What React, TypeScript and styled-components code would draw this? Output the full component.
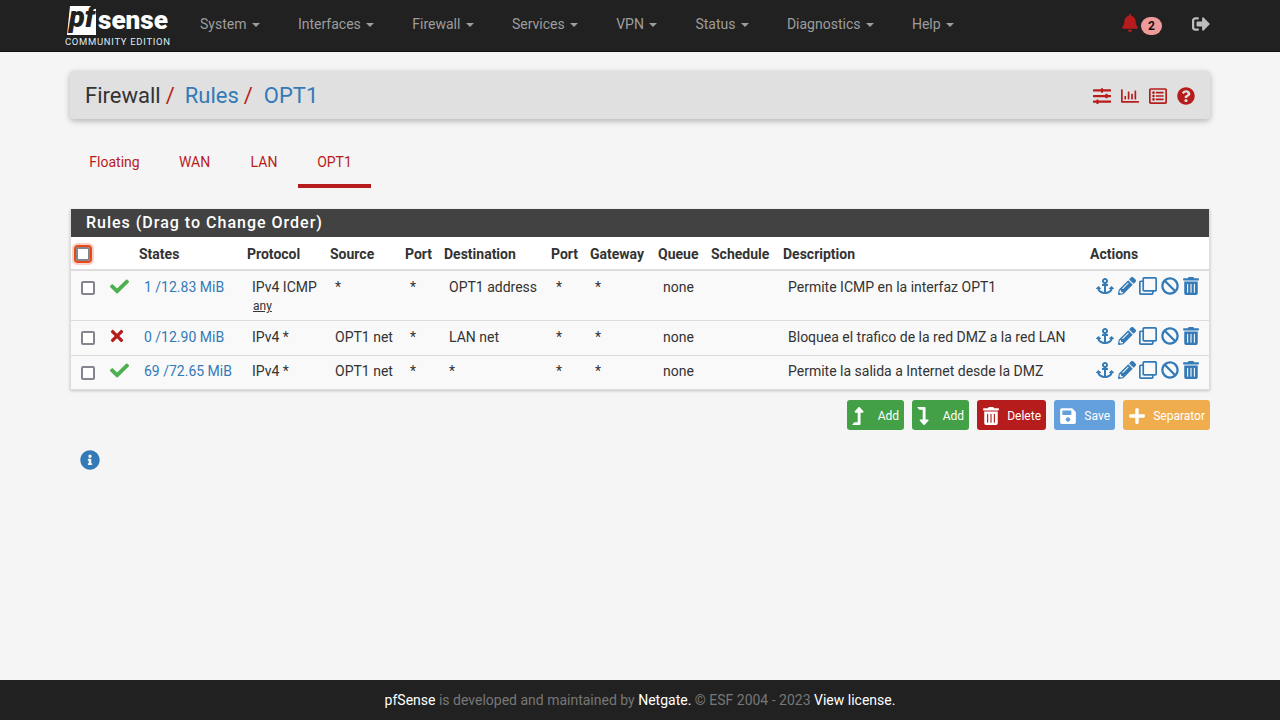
import React from "react";
import styled, { createGlobalStyle } from "styled-components";
import {
  FaAnchor, FaBan, FaBell, FaCheck, FaInfoCircle, FaLevelDownAlt, FaLevelUpAlt,
  FaPencilAlt, FaPlus, FaQuestionCircle, FaRegClone, FaRegListAlt, FaSave, FaSignOutAlt,
  FaSlidersH, FaTimes, FaTrashAlt, FaRegChartBar,
} from "react-icons/fa";

const Global = createGlobalStyle`
  html, body { margin: 0; padding: 0; height: 100%; }
  body { background: #f5f5f5; font-family: Roboto, "Liberation Sans", sans-serif; font-size: 14px; color: #333; }
  #root { height: 720px; }
`;

const Page = styled.div`
  height: 720px;
  display: flex;
  flex-direction: column;
  overflow: hidden;
`;

const Navbar = styled.nav`
  height: 51px;
  flex: none;
  background: #212121;
  border-bottom: 1px solid #101010;
  display: flex;
  align-items: flex-start;
  padding-left: 65px;
  padding-right: 70px;
`;

const Logo = styled.svg`
  width: 107px;
  height: 47px;
  flex: none;
  margin-right: 9px;
`;

const NavMenu = styled.ul`
  list-style: none;
  display: flex;
  margin: 0;
  padding: 0;
  flex: 1;
`;

const NavItem = styled.li`
  padding: 0 19px;
  height: 48px;
  line-height: 48px;
  color: #9d9d9d;
  font-size: 14px;
  white-space: nowrap;
`;

const Caret = styled.span`
  display: inline-block;
  width: 0;
  height: 0;
  margin-left: 2px;
  vertical-align: middle;
  border-top: 4px solid #9d9d9d;
  border-left: 4px solid transparent;
  border-right: 4px solid transparent;
`;

const NavRight = styled.div`
  display: flex;
  align-items: center;
  height: 48px;
`;

const BellGroup = styled.div`
  display: flex;
  align-items: center;
  color: #b71c1c;
  font-size: 18px;
  margin-right: 30px;
  svg { margin-top: -2px; }
`;

const Badge = styled.span`
  width: 21px;
  height: 18px;
  border-radius: 9px;
  background: #ef9a9a;
  color: #111;
  font-size: 12px;
  font-weight: 700;
  display: flex;
  align-items: center;
  justify-content: center;
  margin-left: 2px;
  margin-top: 4px;
`;

const LogoutIcon = styled(FaSignOutAlt)`
  color: #bdbdbd;
  font-size: 18px;
`;

const Main = styled.main`
  flex: 1;
  width: 1140px;
  margin-left: 70px;
  padding-top: 19px;
  display: flex;
  flex-direction: column;
`;

const Breadcrumb = styled.div`
  height: 48px;
  background: #e0e0e0;
  border-radius: 4px;
  box-shadow: 0 2px 6px rgba(0, 0, 0, 0.28);
  display: flex;
  align-items: center;
  justify-content: space-between;
  padding: 0 15px;
`;

const Crumbs = styled.h1`
  margin: 0;
  font-size: 22px;
  font-weight: 400;
  color: #333;
  display: flex;
  align-items: center;
`;

const CrumbSep = styled.span`
  color: #b71c1c;
  margin-left: 5px;
  margin-right: 10px;
`;

const CrumbSepLast = styled(CrumbSep)`
  margin-right: 11px;
`;

const CrumbLink = styled.span`
  color: #337ab7;
`;

const CrumbIcons = styled.div`
  display: flex;
  align-items: center;
  gap: 10px;
  color: #b71c1c;
  font-size: 18px;
  margin-top: 2px;
`;

const Tabs = styled.div`
  display: flex;
  height: 68px;
  margin-top: 1px;
`;

const Tab = styled.div<{ $active?: boolean; $w: number }>`
  width: ${(p) => p.$w}px;
  height: 68px;
  box-sizing: border-box;
  text-align: center;
  padding-top: 34px;
  color: #b71c1c;
  line-height: 16px;
  border-bottom: 4px solid ${(p) => (p.$active ? "#b71c1c" : "transparent")};
`;

const Panel = styled.section`
  margin-top: 21px;
  background: #fff;
  border: 1px solid #ddd;
  border-top: none;
  box-shadow: 0 1px 3px rgba(0, 0, 0, 0.2);
`;

const PanelTitle = styled.h2`
  margin: 0;
  height: 28px;
  background: #424242;
  color: #fff;
  font-size: 16px;
  font-weight: 500;
  letter-spacing: 1px;
  line-height: 28px;
  padding-left: 15px;
`;

const Table = styled.table`
  width: 100%;
  table-layout: fixed;
  border-collapse: collapse;
  font-size: 14px;
`;

const Th = styled.th<{ $w?: number }>`
  ${(p) => (p.$w ? `width: ${p.$w}px;` : "")}
  height: 33px;
  box-sizing: border-box;
  padding: 2px 0 0 4px;
  text-align: left;
  font-weight: 700;
  color: #333;
  background: #fff;
  border-bottom: 2px solid #ddd;
  white-space: nowrap;
`;

const FirstTh = styled(Th)`
  padding-left: 5px;
`;

const Row = styled.tr<{ $h: number }>`
  height: ${(p) => p.$h}px;
  background: #f9f9f9;
  border-bottom: 1px solid #ddd;
  &:last-child {
    border-bottom: none;
    --up: 1px;
  }
`;

const Td = styled.td`
  padding: calc(7px - var(--up, 0px)) 0 0 9px;
  vertical-align: top;
  line-height: 18px;
  white-space: nowrap;
  color: #333;
`;

const BoxTd = styled(Td)`
  padding-left: 10px;
  padding-top: 10px;
`;

const IconTd = styled(Td)`
  padding-left: 5px;
  padding-top: calc(6px - var(--up, 0px));
`;

const Box = styled.span<{ $focus?: boolean }>`
  display: block;
  width: 14px;
  height: 14px;
  box-sizing: border-box;
  background: #fff;
  border: 2px solid #85858f;
  border-radius: 2px;
  ${(p) =>
    p.$focus
      ? "outline: 2px solid #e64a19; outline-offset: 0; box-shadow: 0 0 0 4px rgba(230, 74, 25, 0.25);"
      : ""}
`;

const CheckIcon = styled(FaCheck)`
  color: #4caf50;
  font-size: 19px;
  display: block;
`;

const CrossIcon = styled(FaTimes)`
  color: #b71c1c;
  font-size: 18px;
  display: block;
  margin-left: -2px;
`;

const StatLink = styled.span`
  color: #337ab7;
`;

const Any = styled.div`
  font-size: 12px;
  text-decoration: underline;
  margin-left: 1px;
  margin-top: 2px;
  line-height: 16px;
`;

const Actions = styled.div`
  display: flex;
  align-items: center;
  gap: 3.5px;
  color: #337ab7;
  font-size: 18px;
  height: 18px;
  margin-top: -1px;
  margin-left: 1px;
`;

const Buttons = styled.div`
  display: flex;
  justify-content: flex-end;
  gap: 8px;
  margin-top: 10px;
`;

const Btn = styled.div<{ $bg: string; $w: number }>`
  width: ${(p) => p.$w}px;
  height: 30px;
  box-sizing: border-box;
  background: ${(p) => p.$bg};
  border-radius: 3px;
  color: #fff;
  font-size: 12px;
  display: flex;
  align-items: center;
  justify-content: space-between;
  padding: 1px 5px 0 5px;
  svg { font-size: 18px; }
`;

const ArrowBtnIcon = styled.span`
  display: flex;
  margin-left: -3px;
`;

const Info = styled(FaInfoCircle)`
  color: #337ab7;
  font-size: 20px;
  margin: 20px 0 0 10px;
  display: block;
`;

const Footer = styled.footer`
  height: 40px;
  flex: none;
  background: #212121;
  color: #777;
  text-align: center;
  line-height: 40px;
  font-size: 14px;
`;

const FootLink = styled.span`
  color: #fff;
`;

const menu = ["System", "Interfaces", "Firewall", "Services", "VPN", "Status", "Diagnostics", "Help"];

const rows = [
  { h: 50, ok: true, st: "1 /12.83 MiB", proto: "IPv4 ICMP", any: true, src: "*", dst: "OPT1 address", desc: "Permite ICMP en la interfaz OPT1" },
  { h: 35, ok: false, st: "0 /12.90 MiB", proto: "IPv4 *", any: false, src: "OPT1 net", dst: "LAN net", desc: "Bloquea el trafico de la red DMZ a la red LAN" },
  { h: 34, ok: true, st: "69 /72.65 MiB", proto: "IPv4 *", any: false, src: "OPT1 net", dst: "*", desc: "Permite la salida a Internet desde la DMZ" },
];

export default function App() {
  return (
    <Page>
      <Global />
      <Navbar>
        <Logo viewBox="0 0 107 47">
          <defs>
            <clipPath id="pfbox">
              <polygon points="5,6 31,6 31,35 2,35" />
            </clipPath>
          </defs>
          <polygon points="5,6 31,6 31,35 2,35" fill="#fff" />
          <text x="4" y="27" clipPath="url(#pfbox)" fontFamily="Roboto, sans-serif" fontWeight="900" fontStyle="italic" fontSize="30" fill="#212121" textLength="26" lengthAdjust="spacingAndGlyphs">pf</text>
          <text x="33" y="29" fontFamily="Roboto, sans-serif" fontWeight="900" fontSize="25" fill="#fff" textLength="70" lengthAdjust="spacingAndGlyphs">sense</text>
          <text x="0" y="45" fontFamily="Roboto, sans-serif" fontSize="9.5" fill="#dfe9f2" textLength="105" lengthAdjust="spacing">COMMUNITY EDITION</text>
        </Logo>
        <NavMenu>
          {menu.map((m) => (
            <NavItem key={m}>
              {m} <Caret />
            </NavItem>
          ))}
        </NavMenu>
        <NavRight>
          <BellGroup>
            <FaBell />
            <Badge>2</Badge>
          </BellGroup>
          <LogoutIcon />
        </NavRight>
      </Navbar>
      <Main>
        <Breadcrumb>
          <Crumbs>
            Firewall<CrumbSep>/</CrumbSep>
            <CrumbLink>Rules</CrumbLink><CrumbSepLast>/</CrumbSepLast>
            <CrumbLink>OPT1</CrumbLink>
          </Crumbs>
          <CrumbIcons>
            <FaSlidersH />
            <FaRegChartBar />
            <FaRegListAlt />
            <FaQuestionCircle />
          </CrumbIcons>
        </Breadcrumb>
        <Tabs>
          <Tab $w={89}>Floating</Tab>
          <Tab $w={71}>WAN</Tab>
          <Tab $w={68}>LAN</Tab>
          <Tab $w={73} $active>OPT1</Tab>
        </Tabs>
        <Panel>
          <PanelTitle>Rules (Drag to Change Order)</PanelTitle>
          <Table>
            <thead>
              <tr>
                <FirstTh $w={34}><Box $focus /></FirstTh>
                <Th $w={30} />
                <Th $w={108}>States</Th>
                <Th $w={83}>Protocol</Th>
                <Th $w={75}>Source</Th>
                <Th $w={39}>Port</Th>
                <Th $w={107}>Destination</Th>
                <Th $w={39}>Port</Th>
                <Th $w={68}>Gateway</Th>
                <Th $w={53}>Queue</Th>
                <Th $w={72}>Schedule</Th>
                <Th $w={307}>Description</Th>
                <Th>Actions</Th>
              </tr>
            </thead>
            <tbody>
              {rows.map((r) => (
                <Row key={r.st} $h={r.h}>
                  <BoxTd><Box /></BoxTd>
                  <IconTd>{r.ok ? <CheckIcon /> : <CrossIcon />}</IconTd>
                  <Td><StatLink>{r.st}</StatLink></Td>
                  <Td>
                    {r.proto}
                    {r.any && <Any>any</Any>}
                  </Td>
                  <Td>{r.src}</Td>
                  <Td>*</Td>
                  <Td>{r.dst}</Td>
                  <Td>*</Td>
                  <Td>*</Td>
                  <Td>none</Td>
                  <Td />
                  <Td>{r.desc}</Td>
                  <Td>
                    <Actions>
                      <FaAnchor />
                      <FaPencilAlt />
                      <FaRegClone />
                      <FaBan />
                      <FaTrashAlt />
                    </Actions>
                  </Td>
                </Row>
              ))}
            </tbody>
          </Table>
        </Panel>
        <Buttons>
          <Btn $bg="#43a047" $w={57}><ArrowBtnIcon><FaLevelUpAlt /></ArrowBtnIcon>Add</Btn>
          <Btn $bg="#43a047" $w={57}><ArrowBtnIcon><FaLevelDownAlt /></ArrowBtnIcon>Add</Btn>
          <Btn $bg="#b71c1c" $w={69}><FaTrashAlt />Delete</Btn>
          <Btn $bg="#64a0dc" $w={61}><FaSave />Save</Btn>
          <Btn $bg="#f0ad4e" $w={87}><FaPlus />Separator</Btn>
        </Buttons>
        <Info />
      </Main>
      <Footer>
        <FootLink>pfSense</FootLink> is developed and maintained by <FootLink>Netgate.</FootLink> © ESF 2004 - 2023 <FootLink>View license.</FootLink>
      </Footer>
    </Page>
  );
}
